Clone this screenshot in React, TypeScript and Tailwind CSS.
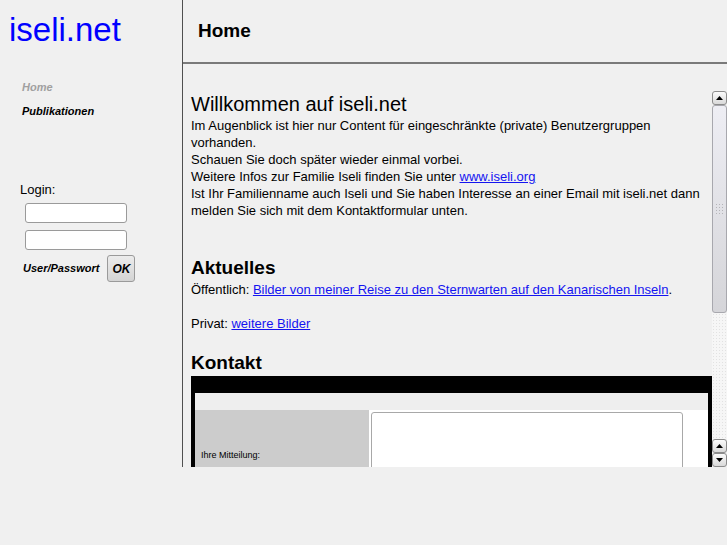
import type { ReactNode } from "react";

const font = "font-['Liberation_Sans',Arial,sans-serif]";

function Arrow({ down = false }: { down?: boolean }) {
  return (
    <div className="flex h-[14px] w-[15px] items-center justify-center rounded-[3px] border border-[#8c8c8c] bg-gradient-to-b from-[#fbfbfb] to-[#d9d9d9]">
      <svg width="7" height="4" viewBox="0 0 7 4" aria-hidden>
        {down ? <path d="M0 0h7L3.5 4z" fill="#000" /> : <path d="M0 4h7L3.5 0z" fill="#000" />}
      </svg>
    </div>
  );
}

function Scrollbar() {
  return (
    <div className="flex w-[15px] shrink-0 flex-col">
      <Arrow />
      <div className="flex h-[208px] items-center justify-center rounded-[3px] border border-[#a8a8ae] bg-gradient-to-b from-[#eeeef4] to-[#d5d5d9]">
        <div className="h-[12px] w-[9px] bg-[radial-gradient(#b4b4b8_0.8px,transparent_1px)] bg-[length:3px_3px]" />
      </div>
      <div className="flex-1 bg-[#f6f6f6] bg-[radial-gradient(#e2e2e2_0.6px,transparent_0.8px)] bg-[length:3px_3px]" />
      <Arrow />
      <Arrow down />
    </div>
  );
}

function Link({ children }: { children: ReactNode }) {
  return (
    <a href="#" className="text-[#1414f0] underline">
      {children}
    </a>
  );
}

function Sidebar() {
  return (
    <aside className="flex w-[183px] shrink-0 flex-col border-r border-[#505050]">
      <div className="mt-[13px] pl-[9px] text-[33px] leading-[33px] text-[#0000ff]">iseli.net</div>
      <nav className="mt-[29px] flex flex-col pl-[22px] text-[11px] font-bold italic leading-[24px]">
        <a href="#" className="text-[#a0a0a0]">Home</a>
        <a href="#" className="text-black">Publikationen</a>
      </nav>
      <div className="mt-[59px] pl-[20px] text-[13px] leading-[16px] text-black">Login:</div>
      <input className="mt-[5px] ml-[25px] h-[20px] w-[102px] rounded-[3px] border border-[#9a9a9a] bg-white" />
      <input className="mt-[7px] ml-[25px] h-[20px] w-[102px] rounded-[3px] border border-[#9a9a9a] bg-white" />
      <div className="mt-[5px] flex items-center gap-[8px] pl-[23px]">
        <span className="text-[11px] font-bold italic text-black">User/Passwort</span>
        <button className="h-[27px] w-[28px] rounded-[3px] border border-[#9a9a9a] bg-gradient-to-b from-[#ececec] to-[#d4d4d4] text-[12px] font-bold italic text-black">
          OK
        </button>
      </div>
    </aside>
  );
}

function ContactForm() {
  return (
    <div className="mt-[2px] border-x-4 border-t-[17px] border-black">
      <div className="h-[17px] bg-[#eeeeee]" />
      <div className="flex">
        <div className="flex h-[90px] w-[174px] items-center bg-[#cccccc] pl-[6px] text-[9px] text-black">
          Ihre Mitteilung:
        </div>
        <div className="flex-1 bg-white pl-[2px] pt-[2px]">
          <textarea className="block h-[100px] w-[312px] resize-none rounded-[3px] border border-[#a8a8a8] bg-white" />
        </div>
      </div>
    </div>
  );
}

export default function App() {
  return (
    <div className={`min-h-screen bg-[#f0f0f0] ${font}`}>
      <div className="flex h-[467px]">
        <Sidebar />
        <main className="flex min-w-0 flex-1 flex-col">
          <header className="flex h-[64px] shrink-0 items-center border-b-2 border-[#7a7a7a] pl-[15px]">
            <h1 className="text-[19px] font-bold text-black">Home</h1>
          </header>
          <div className="mt-[27px] flex min-h-0 flex-1">
            <div className="min-w-0 flex-1 overflow-hidden pl-[8px] text-[13px] leading-[17px] text-black">
              <h2 className="text-[20px] leading-[26px]">Willkommen auf iseli.net</h2>
              <p>
                Im Augenblick ist hier nur Content für eingeschränkte (private) Benutzergruppen vorhanden.
                <br />
                Schauen Sie doch später wieder einmal vorbei.
                <br />
                Weitere Infos zur Familie Iseli finden Sie unter <Link>www.iseli.org</Link>
                <br />
                Ist Ihr Familienname auch Iseli und Sie haben Interesse an einer Email mit iseli.net dann melden Sie
                sich mit dem Kontaktformular unten.
              </p>
              <h2 className="mt-[37px] text-[19px] font-bold leading-[23px]">Aktuelles</h2>
              <p className="mt-[2px]">
                Öffentlich: <Link>Bilder von meiner Reise zu den Sternwarten auf den Kanarischen Inseln</Link>.
              </p>
              <p className="mt-[17px]">
                Privat: <Link>weitere Bilder</Link>
              </p>
              <h2 className="mt-[19px] text-[19px] font-bold leading-[23px]">Kontakt</h2>
              <ContactForm />
            </div>
            <Scrollbar />
          </div>
        </main>
      </div>
    </div>
  );
}
